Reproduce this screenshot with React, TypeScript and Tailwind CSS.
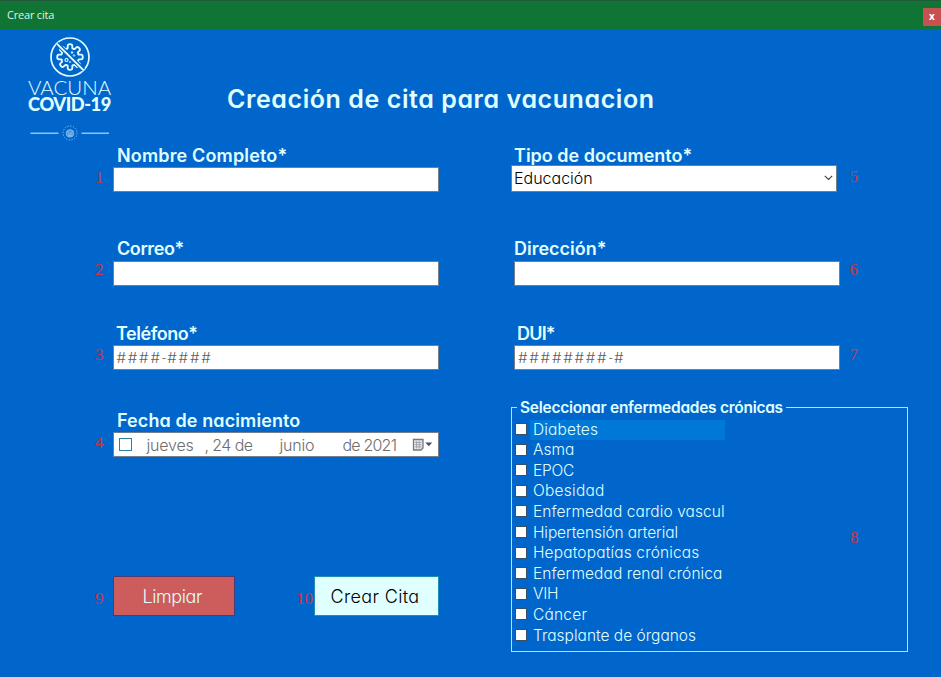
import type { ReactNode } from 'react';

const GOTHIC = "font-['Inter','Open_Sans',sans-serif] [font-feature-settings:'cv11'] whitespace-nowrap";

function Mark({ children, className = '' }: { children: ReactNode; className?: string }) {
  return (
    <span className={`font-['Liberation_Serif',serif] text-[17px] leading-[18px] text-[#cc3547] ${className}`}>
      {children}
    </span>
  );
}

function Label({ children, className = '' }: { children: ReactNode; className?: string }) {
  return (
    <div className={`${GOTHIC} h-[20px] text-[18px] leading-[20px] font-semibold text-[#e0ffff] ${className}`}>
      {children}
    </div>
  );
}

function Box({ children, className = 'w-[326px] h-[25px]' }: { children?: ReactNode; className?: string }) {
  return (
    <div className={`${GOTHIC} flex shrink-0 items-center border border-[#71808c] bg-white font-light ${className}`}>
      {children}
    </div>
  );
}

function MaskedBox({ head, tail }: { head: string; tail: string }) {
  return (
    <Box className="h-[25px] w-[326px] pt-[2px] pl-[3px] text-[15px] tracking-[1.8px] text-[#606060]">
      <span>{head}</span>
      <span className="text-[10px] font-normal tracking-[1px]">-</span>
      <span>{tail}</span>
    </Box>
  );
}

function Logo() {
  const teeth = [0, 45, 90, 135, 180, 225, 270, 315];
  return (
    <div className="flex w-[83px] flex-col items-center text-[#e0ffff]">
      <svg width="40" height="40" viewBox="0 0 40 40" fill="none" stroke="currentColor" strokeWidth="1.7">
        <circle cx="20" cy="20" r="19" />
        <g strokeWidth="1.8" strokeLinejoin="round">
          {teeth.map((a) => (
            <path
              key={a}
              transform={`rotate(${a} 20 20)`}
              d="M16.7 12 L17.7 11.3 V9 Q17.7 7.2 20 7.2 Q22.3 7.2 22.3 9 V11.3 L24.2 12.1"
            />
          ))}
        </g>
        <circle cx="16.5" cy="23" r="1.5" strokeWidth="1.2" />
        <circle cx="22" cy="15.5" r="0.9" fill="currentColor" strokeWidth="0.5" />
        <circle cx="24" cy="18.5" r="0.8" strokeWidth="0.8" />
        <circle cx="20" cy="25" r="0.6" strokeWidth="0.8" />
        <path d="M7 6.5 L33.5 33" stroke="#0066cc" strokeWidth="4.2" />
        <path d="M6.8 6.6 L33.4 33.2" strokeWidth="1.9" />
      </svg>
      <div className="mt-px h-[18px] font-['Lato',sans-serif] text-[20.5px] leading-[18px] font-light whitespace-nowrap">VACUNA</div>
      <div className="h-[16px] font-['Lato',sans-serif] text-[18.3px] leading-[16px] font-black tracking-[-0.45px] whitespace-nowrap">COVID-19</div>
      <svg className="mt-[12px]" width="80" height="18" viewBox="0 0 80 18" fill="none" stroke="#8fc3ef">
        <path d="M0.5 9.2 H28.5 M51.5 9.2 H79" strokeWidth="1.4" />
        <circle cx="40" cy="9" r="7" strokeWidth="1" strokeDasharray="1.2 1.55" />
        <circle cx="40" cy="9.4" r="3.7" fill="#4c99dd" strokeWidth="0.9" />
        <path d="M37.6 7.5 L40 10.8 L42.4 7.5 M38 11.4 H42" strokeWidth="0.8" />
      </svg>
    </div>
  );
}

const diseases = [
  { name: 'Diabetes', look: 'bg-[#0078d7] tracking-[0.15px]' },
  { name: 'Asma', look: '' },
  { name: 'EPOC', look: 'tracking-[-0.25px]' },
  { name: 'Obesidad', look: 'tracking-[0.25px]' },
  { name: 'Enfermedad cardio vascul', look: 'tracking-[0.08px]' },
  { name: 'Hipertensión arterial', look: 'tracking-[-0.1px]' },
  { name: 'Hepatopatías crónicas', look: 'tracking-[0.15px]' },
  { name: 'Enfermedad renal crónica', look: 'tracking-[0.08px]' },
  { name: 'VIH', look: 'tracking-[-0.3px]' },
  { name: 'Cáncer', look: 'tracking-[0.2px]' },
  { name: 'Trasplante de órganos', look: '' },
];

function DateBox() {
  return (
    <Box className="h-[25px] w-[326px] text-[16px] tracking-[-0.2px] text-[#6d6d6d]">
      <span className="ml-[5px] h-[13px] w-[13px] border border-[#2b7fa8]" />
      <span className="ml-[15px] w-[58px]">jueves</span>
      <span className="w-[75px] tracking-[-0.6px]">, 24 de</span>
      <span className="w-[63px]">junio</span>
      <span className="w-[69px] tracking-[-0.8px]">de 2021</span>
      <svg width="21" height="14" viewBox="0 0 21 14">
        <path d="M1.5 1.5 H11 V10 L9 12 H1.5 Z" fill="#e8e8ea" stroke="#777" strokeWidth="1.3" />
        <path d="M3 4.5 H9.5 M3 6.7 H9.5 M3 8.9 H9.5 M4.6 3 V10.5 M7.3 3 V10.5" stroke="#a0a0a8" strokeWidth="0.9" />
        <path d="M13.3 4.5 H20.3 L16.8 8.2 Z" fill="#44536f" />
      </svg>
    </Box>
  );
}

export default function App() {
  return (
    <div className="flex h-[677px] w-[941px] flex-col overflow-hidden bg-[#0066cc]">
      <header className="flex h-[29px] shrink-0 items-center justify-between border-t border-[#24583a] bg-[#107434] pl-[7px]">
        <span className="font-['Open_Sans',sans-serif] text-[11px] leading-[14px] tracking-[-0.2px] text-[#dff5e8]">Crear cita</span>
        <button className="mt-[4px] flex h-[18px] w-[18px] items-center justify-center bg-[#c75050] pb-px font-['Open_Sans',sans-serif] text-[10px] font-bold text-white">x</button>
      </header>

      <div className="flex h-[117px] shrink-0 pl-[28px]">
        <div className="pt-[8px]"><Logo /></div>
        <h1 className={`${GOTHIC} ml-[116px] pt-[56px] text-[25px] leading-[28px] font-semibold tracking-[0.58px] text-[#e0ffff]`}>
          Creación de cita para vacunacion
        </h1>
      </div>

      <main className="flex">
        <section className="flex w-[511px] flex-col pl-[95px]">
          <Label className="pl-[22px] tracking-[0.15px]">Nombre Completo*</Label>
          <div className="mt-px flex"><Mark className="w-[17.5px] pt-[2px]">1</Mark><Box /></div>

          <Label className="mt-[47px] pl-[22px] tracking-[-0.4px]">Correo*</Label>
          <div className="mt-[2px] flex"><Mark className="w-[17.5px]">2</Mark><Box /></div>

          <Label className="mt-[38px] pl-[21px] tracking-[-0.45px]">Teléfono*</Label>
          <div className="mt-px flex">
            <Mark className="w-[17.5px] pt-px">3</Mark>
            <MaskedBox head="####" tail="####" />
          </div>

          <Label className="mt-[41px] pl-[22px] tracking-[0.1px]">Fecha de nacimiento</Label>
          <div className="mt-px flex"><Mark className="w-[17.5px] pt-[2px]">4</Mark><DateBox /></div>

          <div className="mt-[119px] flex">
            <Mark className="w-[17.5px] pt-[14px]">9</Mark>
            <button className={`${GOTHIC} h-[40px] w-[122.5px] border border-[#4a3a78] bg-[#cd5c5c] pr-[3px] text-[18px] font-light tracking-[-0.4px] text-[#e0ffff]`}>Limpiar</button>
            <Mark className="ml-[61px] w-[18px] pt-[14px]">10</Mark>
            <button className={`${GOTHIC} h-[40px] w-[125px] border border-[#1d8fb5] bg-[#e0ffff] pr-[3px] text-[18px] font-light tracking-[0.35px] text-black`}>Crear Cita</button>
          </div>
        </section>

        <section className="flex w-[398px] flex-col">
          <Label className="pl-[3px]">Tipo de documento*</Label>
          <div className="-mt-px flex">
            <Box className="h-[27px] w-[326px] justify-between pr-[3px] pb-px pl-[2px] text-[16px] text-black">
              <span>Educación</span>
              <svg width="9" height="6" viewBox="0 0 9 6" fill="none" stroke="#404040" strokeWidth="1.1"><path d="M0.8 0.8 L4.5 4.5 L8.2 0.8" /></svg>
            </Box>
            <Mark className="ml-[12.5px] pt-[3px]">5</Mark>
          </div>

          <Label className="mt-[47px] pl-[3px]">Dirección*</Label>
          <div className="mt-[2px] flex pl-[3px]"><Box /><Mark className="ml-[9.5px]">6</Mark></div>

          <Label className="mt-[38px] pl-[6px] tracking-[-0.8px]">DUI*</Label>
          <div className="mt-px flex pl-[3px]">
            <MaskedBox head="########" tail="#" />
            <Mark className="ml-[9.5px] pt-px">7</Mark>
          </div>

          <fieldset className="mt-[27px] h-[255px] w-[397px] border border-[#b6e2f4] pl-[3px]">
            <legend className={`${GOTHIC} ml-[2px] h-[20px] px-[3px] text-[15.5px] leading-[22px] font-semibold tracking-[-0.27px] text-[#e0ffff]`}>
              Seleccionar enfermedades crónicas
            </legend>
            <div className="flex">
              <ul className="mt-[2.4px] w-[210px]">
                {diseases.map(({ name, look }) => (
                  <li key={name} className="flex h-[20.6px] items-center">
                    <span className="mb-[1.5px] h-[12px] w-[12px] shrink-0 border border-[#35506c] bg-white" />
                    <span className={`${GOTHIC} ml-[3px] h-[20px] w-[195px] pl-[3px] text-[15.5px] leading-[20px] font-light text-[#e0ffff] ${look}`}>
                      {name}
                    </span>
                  </li>
                ))}
              </ul>
              <Mark className="mt-[112px] ml-[125px]">8</Mark>
            </div>
          </fieldset>
        </section>
      </main>
    </div>
  );
}
